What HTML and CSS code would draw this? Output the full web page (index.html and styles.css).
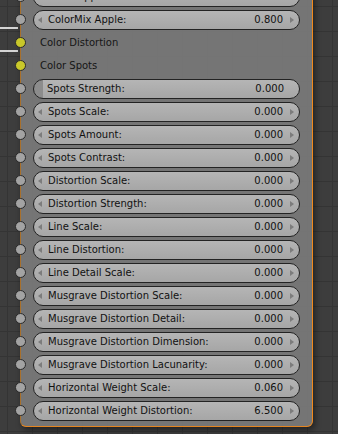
FILE: index.html
```html
<!DOCTYPE html>
<html lang="en">
<head>
    <meta charset="UTF-8">
    <meta name="viewport" content="width=device-width, initial-scale=1.0">
    <title>Node Editor</title>
    <link rel="stylesheet" href="styles.css">
</head>
<body>
    <div class="editor">
        <div class="wire wire-a"></div>
        <div class="wire wire-b"></div>

        <div class="node">
            <div class="row">
                <span class="socket"></span>
                <div class="field"><span class="arrow left"></span><span class="label">Color Apple:</span><span class="value">0.000</span><span class="arrow right"></span></div>
            </div>
            <div class="row">
                <span class="socket"></span>
                <div class="field"><span class="arrow left"></span><span class="label">ColorMix Apple:</span><span class="value">0.800</span><span class="arrow right"></span></div>
            </div>
            <div class="row">
                <span class="socket color"></span>
                <span class="plain">Color Distortion</span>
            </div>
            <div class="row">
                <span class="socket color"></span>
                <span class="plain">Color Spots</span>
            </div>
            <div class="row">
                <span class="socket"></span>
                <div class="field slider"><span class="label">Spots Strength:</span><span class="value">0.000</span></div>
            </div>
            <div class="row">
                <span class="socket"></span>
                <div class="field"><span class="arrow left"></span><span class="label">Spots Scale:</span><span class="value">0.000</span><span class="arrow right"></span></div>
            </div>
            <div class="row">
                <span class="socket"></span>
                <div class="field"><span class="arrow left"></span><span class="label">Spots Amount:</span><span class="value">0.000</span><span class="arrow right"></span></div>
            </div>
            <div class="row">
                <span class="socket"></span>
                <div class="field"><span class="arrow left"></span><span class="label">Spots Contrast:</span><span class="value">0.000</span><span class="arrow right"></span></div>
            </div>
            <div class="row">
                <span class="socket"></span>
                <div class="field"><span class="arrow left"></span><span class="label">Distortion Scale:</span><span class="value">0.000</span><span class="arrow right"></span></div>
            </div>
            <div class="row">
                <span class="socket"></span>
                <div class="field"><span class="arrow left"></span><span class="label">Distortion Strength:</span><span class="value">0.000</span><span class="arrow right"></span></div>
            </div>
            <div class="row">
                <span class="socket"></span>
                <div class="field"><span class="arrow left"></span><span class="label">Line Scale:</span><span class="value">0.000</span><span class="arrow right"></span></div>
            </div>
            <div class="row">
                <span class="socket"></span>
                <div class="field"><span class="arrow left"></span><span class="label">Line Distortion:</span><span class="value">0.000</span><span class="arrow right"></span></div>
            </div>
            <div class="row">
                <span class="socket"></span>
                <div class="field"><span class="arrow left"></span><span class="label">Line Detail Scale:</span><span class="value">0.000</span><span class="arrow right"></span></div>
            </div>
            <div class="row">
                <span class="socket"></span>
                <div class="field"><span class="arrow left"></span><span class="label">Musgrave Distortion Scale:</span><span class="value">0.000</span><span class="arrow right"></span></div>
            </div>
            <div class="row">
                <span class="socket"></span>
                <div class="field"><span class="arrow left"></span><span class="label">Musgrave Distortion Detail:</span><span class="value">0.000</span><span class="arrow right"></span></div>
            </div>
            <div class="row">
                <span class="socket"></span>
                <div class="field"><span class="arrow left"></span><span class="label">Musgrave Distortion Dimension:</span><span class="value">0.000</span><span class="arrow right"></span></div>
            </div>
            <div class="row">
                <span class="socket"></span>
                <div class="field"><span class="arrow left"></span><span class="label">Musgrave Distortion Lacunarity:</span><span class="value">0.000</span><span class="arrow right"></span></div>
            </div>
            <div class="row">
                <span class="socket"></span>
                <div class="field"><span class="arrow left"></span><span class="label">Horizontal Weight Scale:</span><span class="value">0.060</span><span class="arrow right"></span></div>
            </div>
            <div class="row">
                <span class="socket"></span>
                <div class="field"><span class="arrow left"></span><span class="label">Horizontal Weight Distortion:</span><span class="value">6.500</span><span class="arrow right"></span></div>
            </div>
        </div>
    </div>
</body>
</html>
```

FILE: styles.css
```css
body {
    margin: 0;
    padding: 0;
    background-color: #3d3d3d;
    background-image:
        linear-gradient(to right, #343434 1px, transparent 1px),
        linear-gradient(to bottom, #343434 1px, transparent 1px);
    background-size: 25px 25px;
    background-position: 7px 6px;
    font-family: 'DejaVu Sans', 'Liberation Sans', sans-serif;
    font-size: 10px;
    color: #111;
    height: 434px;
    overflow: hidden;
}

.editor {
    position: relative;
    height: 434px;
}

/* links coming into the colour sockets */
.wire {
    position: absolute;
    left: 0;
    width: 18px;
    height: 2px;
    background: #d4d4d4;
}

.wire-a {
    top: 42px;
}

.wire-b {
    top: 65px;
}

.node {
    position: relative;
    box-sizing: border-box;
    width: 293px;
    margin-left: 20px;
    margin-top: -15px;
    padding: 0 12px 4px 12px;
    background: rgba(121, 121, 121, 0.92);
    border-left: 1px solid #a8702c;
    border-right: 1px solid #f0891c;
    border-bottom: 1px solid #e58520;
    border-radius: 0 0 6px 6px;
    box-shadow: 2px 3px 6px rgba(0, 0, 0, 0.45);
}

.row {
    position: relative;
    height: 23px;
    display: flex;
    align-items: center;
}

.socket {
    position: absolute;
    left: -18px;
    top: 6px;
    box-sizing: border-box;
    width: 11px;
    height: 11px;
    border-radius: 50%;
    background: #a3a3a3;
    border: 1px solid #2a2a2a;
}

.socket.color {
    background: #c9c82a;
}

.plain {
    padding-left: 7px;
    color: #151515;
}

.field {
    flex: 1;
    box-sizing: border-box;
    height: 20px;
    display: flex;
    align-items: center;
    padding: 0 5px 0 4px;
    border: 1px solid #232323;
    border-radius: 10px;
    background: linear-gradient(to bottom, #b5b5b5, #a6a6a6);
}

.field .label {
    flex: 1;
    margin-left: 6px;
    white-space: nowrap;
    overflow: hidden;
}

.field .value {
    margin-right: 7px;
}

.arrow {
    width: 0;
    height: 0;
    border-top: 3px solid transparent;
    border-bottom: 3px solid transparent;
}

.arrow.left {
    border-right: 4px solid #7c7c7c;
}

.arrow.right {
    border-left: 4px solid #7c7c7c;
}

.field.slider {
    padding-left: 13px;
    padding-right: 15px;
    background:
        linear-gradient(to right, #8c8c8c 0, #8c8c8c 9px, transparent 9px),
        linear-gradient(to bottom, #b5b5b5, #a6a6a6);
}

.field.slider .label {
    margin-left: 0;
}

.field.slider .value {
    margin-right: 0;
}
```
